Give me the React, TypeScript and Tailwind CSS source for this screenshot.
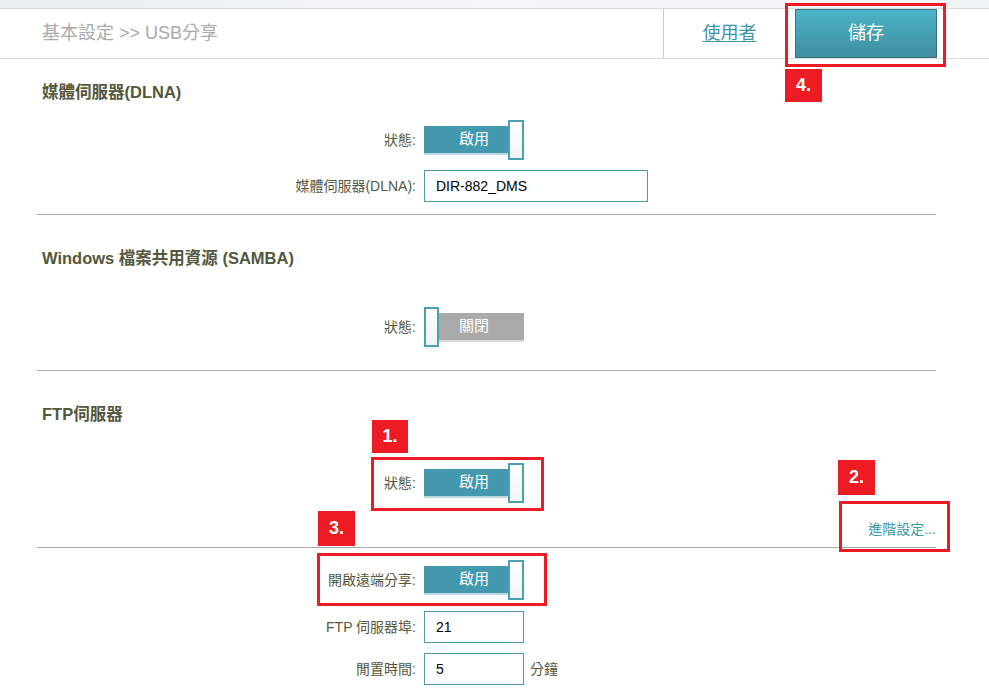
import React from 'react';

const font = "font-['Liberation_Sans','Noto_Sans_CJK_TC',sans-serif]";

function Toggle({ on, label }: { on: boolean; label: string }) {
  return (
    <div className="flex items-center w-[100px] h-[40px]">
      {on ? (
        <>
          <div className="w-[84px] h-[29px] pl-[16px] bg-[#4499ae] border-b-2 border-[#b9d9e0] flex items-center justify-center text-white text-[15px]">
            {label}
          </div>
          <div className="w-[16px] h-[40px] border-2 border-[#4a9fb2] bg-gradient-to-b from-white to-[#eef4f6]" />
        </>
      ) : (
        <>
          <div className="w-[15px] h-[40px] border-2 border-[#4a9fb2] bg-gradient-to-b from-white to-[#eef4f6]" />
          <div className="w-[85px] h-[29px] pr-[15px] bg-[#aaaaaa] border-b-2 border-[#d9d9d9] flex items-center justify-center text-white text-[15px]">
            {label}
          </div>
        </>
      )}
    </div>
  );
}

function Row({ label, children, className = '' }: { label: string; children: React.ReactNode; className?: string }) {
  return (
    <div className={`flex items-center ${className}`}>
      <div className="w-[380px] text-right text-[14px] text-[#55583d] pr-[1px]">{label}</div>
      <div className="ml-[7px] flex items-center">{children}</div>
    </div>
  );
}

function Field({ value, width }: { value: string; width: string }) {
  return (
    <div className={`${width} h-[32px] border border-[#4a9aa8] flex items-center pl-[11px] text-[14px] text-black`}>
      {value}
    </div>
  );
}

function Heading({ children, className = '' }: { children: React.ReactNode; className?: string }) {
  return (
    <h2 className={`pl-[5px] h-[20px] leading-[20px] text-[16.5px] font-bold text-[#54573b] ${className}`}>{children}</h2>
  );
}

function Tag({ n, className }: { n: string; className: string }) {
  return (
    <div className={`absolute bg-[#ed1c24] text-white font-bold text-[18px] flex items-center justify-center ${className}`}>
      {n}
    </div>
  );
}

export default function App() {
  return (
    <div className={`relative w-[989px] h-[699px] bg-white overflow-hidden ${font}`}>
      {/* top strip */}
      <div className="h-[9px] bg-gradient-to-r from-[#e9efef] via-[#f4f7f7] to-[#eef3f3] border-b border-[#d5dcdc]" />

      {/* header */}
      <div className="flex h-[50px] border-b border-[#dddddd]">
        <div className="pl-[42px] flex items-center text-[18px] text-[#aaaaaa]">基本設定 &gt;&gt; USB分享</div>
        <div className="ml-auto mr-[52px] flex">
          <div className="w-[132px] border-l border-[#cccccc] flex items-center justify-center">
            <span className="text-[18px] text-[#3d96a8] underline underline-offset-2">使用者</span>
          </div>
          <div className="w-[142px] h-[49px] border border-[#3f6f78] bg-gradient-to-b from-[#4cb4c9] to-[#3f8e9e] flex items-center justify-center text-white text-[18px]">
            儲存
          </div>
        </div>
      </div>

      <div className="ml-[37px] w-[899px]">
        {/* DLNA */}
        <Heading className="mt-[23px]">媒體伺服器(DLNA)</Heading>
        <Row label="狀態:" className="mt-[18px]">
          <Toggle on label="啟用" />
        </Row>
        <Row label="媒體伺服器(DLNA):" className="mt-[10px]">
          <Field value="DIR-882_DMS" width="w-[224px]" />
        </Row>
        <div className="mt-[12px] border-b border-[#aaaaaa]" />

        {/* SAMBA */}
        <Heading className="mt-[33px]">Windows 檔案共用資源 (SAMBA)</Heading>
        <Row label="狀態:" className="mt-[39px]">
          <Toggle on={false} label="關閉" />
        </Row>
        <div className="mt-[23px] border-b border-[#aaaaaa]" />

        {/* FTP */}
        <Heading className="mt-[33px]">FTP伺服器</Heading>
        <Row label="狀態:" className="mt-[39px]">
          <Toggle on label="啟用" />
        </Row>
        <div className="mt-[16px] h-[20px] flex justify-end items-center text-[14px] text-[#3d96a8]">進階設定...</div>
        <div className="mt-[8px] border-b border-[#aaaaaa]" />
        <Row label="開啟遠端分享:" className="mt-[12px]">
          <Toggle on label="啟用" />
        </Row>
        <Row label="FTP 伺服器埠:" className="mt-[11px]">
          <Field value="21" width="w-[100px]" />
        </Row>
        <Row label="閒置時間:" className="mt-[10px]">
          <Field value="5" width="w-[100px]" />
          <span className="ml-[6px] text-[14px] text-[#55583d]">分鐘</span>
        </Row>
      </div>

      {/* annotations */}
      <div className="absolute left-[785px] top-[3px] w-[161px] h-[64px] border-[3px] border-[#ed1c24]" />
      <Tag n="4." className="left-[785px] top-[69px] w-[37px] h-[33px]" />
      <Tag n="1." className="left-[372px] top-[420px] w-[36px] h-[33px]" />
      <div className="absolute left-[371px] top-[457px] w-[173px] h-[54px] border-[3px] border-[#ed1c24]" />
      <Tag n="2." className="left-[838px] top-[460px] w-[37px] h-[35px]" />
      <div className="absolute left-[839px] top-[501px] w-[111px] h-[51px] border-[3px] border-[#ed1c24]" />
      <Tag n="3." className="left-[318px] top-[511px] w-[37px] h-[35px]" />
      <div className="absolute left-[317px] top-[553px] w-[230px] h-[53px] border-[3px] border-[#ed1c24]" />
    </div>
  );
}
